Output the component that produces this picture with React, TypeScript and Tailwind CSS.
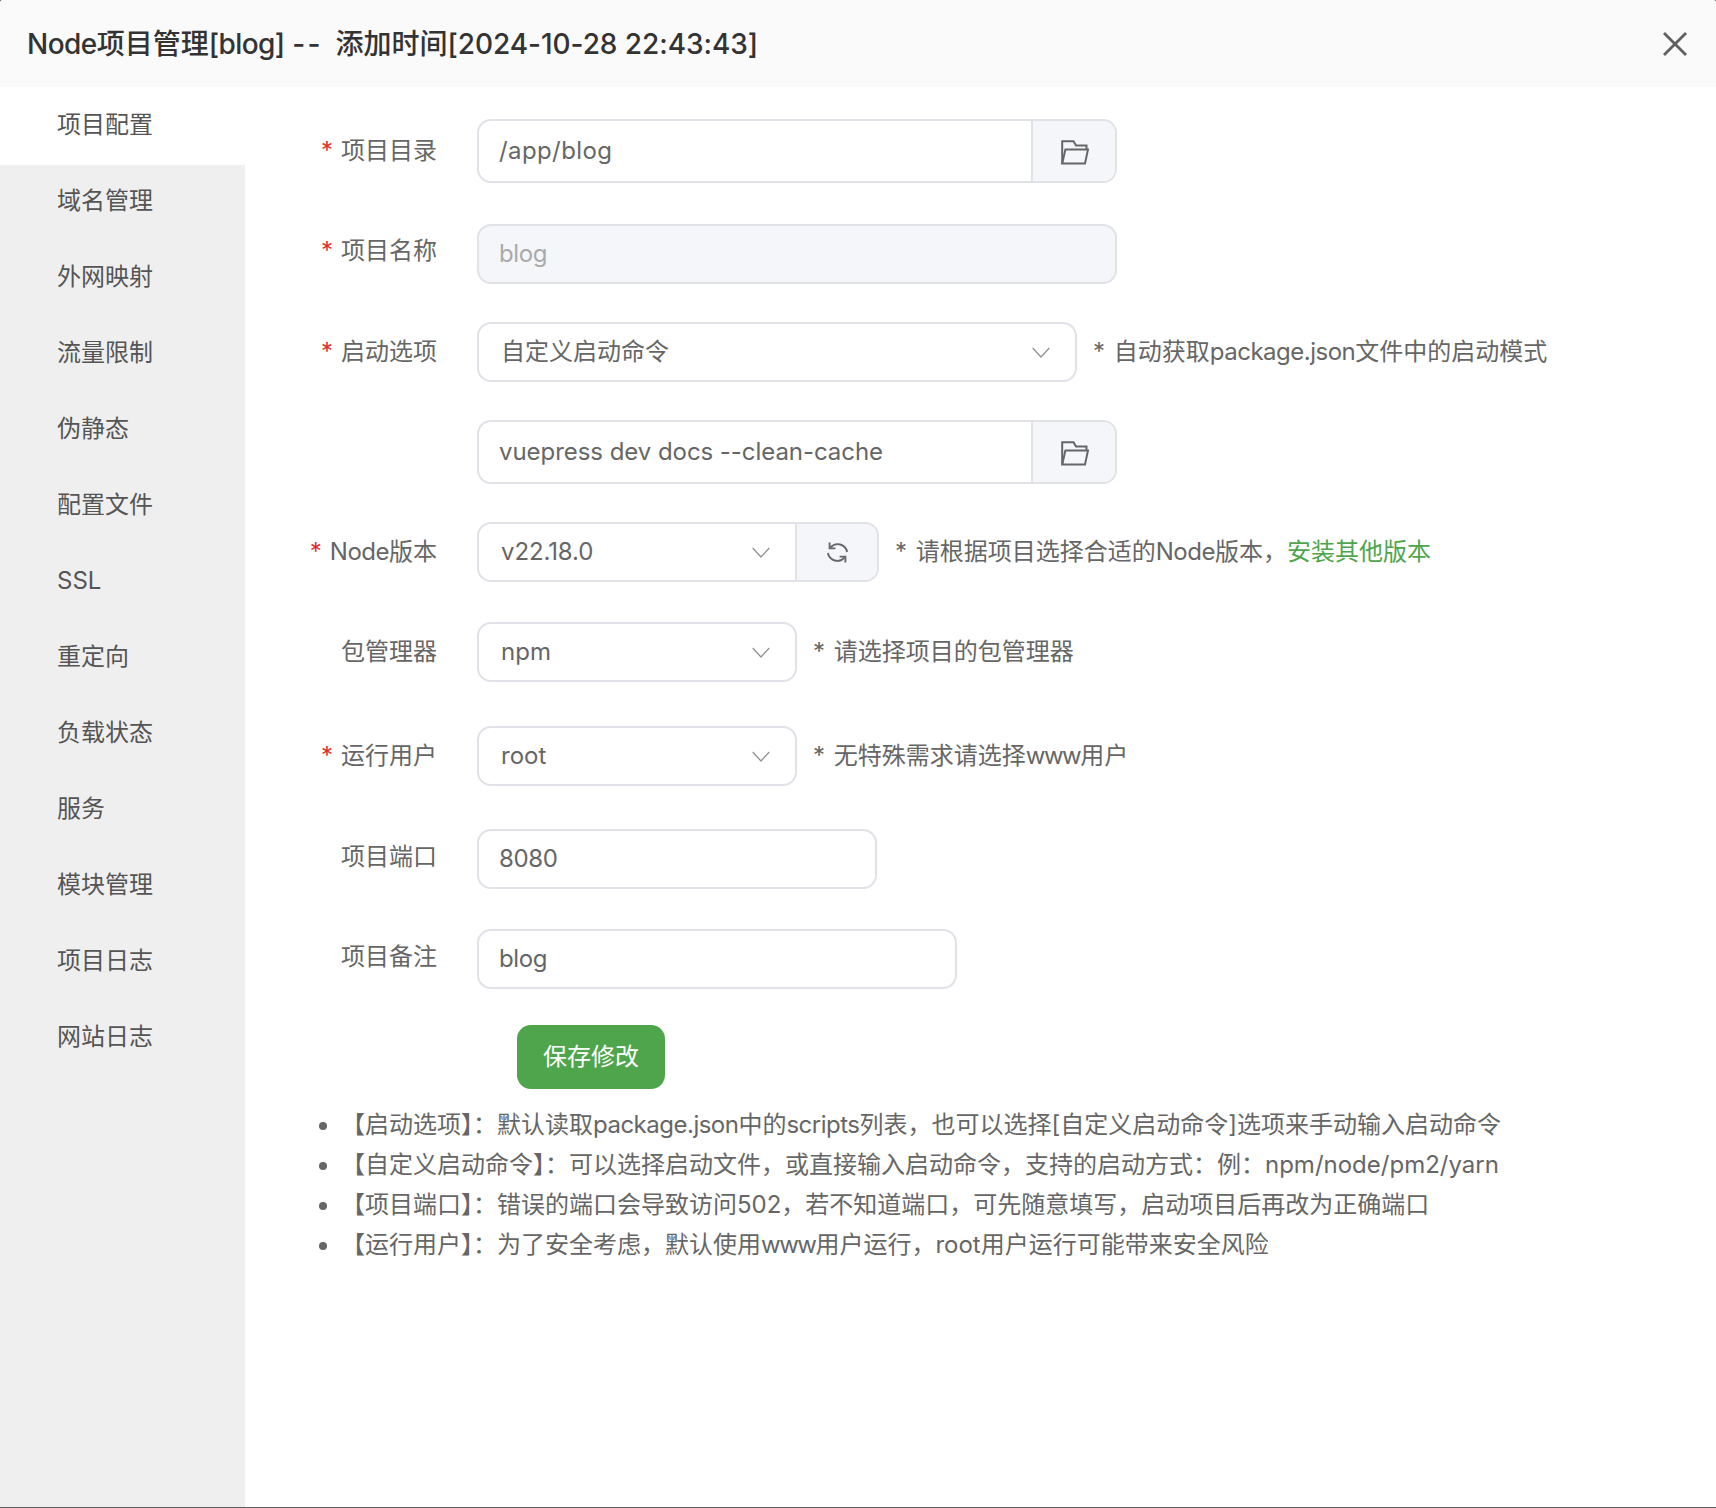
import React from "react";

const FolderIcon = () => (
  <svg width="28" height="25" viewBox="0 0 28 25" fill="none" stroke="#666" strokeWidth="2" className="ml-[1px]">
    <path d="M25.5 9.5V5.5H15L12.5 1.2H1.2V23.5" />
    <path d="M1.2 23.5H24L27 9.5H4.4L1.2 23.5Z" />
  </svg>
);

const Chevron = () => (
  <svg width="18" height="11" viewBox="0 0 18 11" fill="none" stroke="#8f8f8f" strokeWidth="1.2">
    <path d="M0.7 1L9 10L17.3 1" />
  </svg>
);

const Refresh = () => (
  <svg width="21" height="21" viewBox="0 0 21 21" fill="none" stroke="#666" strokeWidth="1.9">
    <path d="M3.6 5.4A9.5 9.5 0 0 1 20.1 10" />
    <path d="M0.9 11A9.5 9.5 0 0 0 17.4 15.6" />
    <path d="M2.6 0.6V6.4H8.4" />
    <path d="M18.4 20.4V14.6H12.6" />
  </svg>
);

const Label = ({ children, required, className = "" }: { children?: React.ReactNode; required?: boolean; className?: string }) => (
  <div className={`mr-[40px] w-[192px] shrink-0 text-right text-[24px] leading-[32px] text-[#666] ${className}`}>
    {required && <span className="mr-[8px] text-[#e02f2f]">*</span>}
    {children}
  </div>
);

const Hint = ({ children }: { children: React.ReactNode }) => (
  <div className="ml-[16px] whitespace-nowrap text-[24px] leading-[32px] text-[#666]">
    <span className="mr-[2px]">*</span> {children}
  </div>
);

const Tight = ({ children }: { children: React.ReactNode }) => <span className="tracking-[-0.5px]">{children}</span>;
const Www = () => <span className="tracking-[-1.5px]">www</span>;

const InputWithFolder = ({ value, track }: { value: string; track: string }) => (
  <div className="flex h-[64px] w-[640px] overflow-hidden rounded-[14px] border-2 border-[#e1e1e8]">
    <div className={`flex flex-1 items-center pl-[20px] text-[24px] text-[#666] ${track}`}>{value}</div>
    <div className="flex w-[84px] items-center justify-center border-l-2 border-[#e1e1e8] bg-[#f5f6fa] pt-[2px]">
      <FolderIcon />
    </div>
  </div>
);

const Select = ({ value, width }: { value: string; width: string }) => (
  <div className={`flex h-[60px] items-center justify-between rounded-[14px] border-2 border-[#e1e1e8] pl-[22px] pr-[25px] ${width}`}>
    <span className="text-[24px] text-[#666]">{value}</span>
    <Chevron />
  </div>
);

const TextInput = ({ value, width }: { value: string; width: string }) => (
  <div className={`flex h-[60px] items-center rounded-[14px] border-2 border-[#e1e1e8] pl-[20px] text-[24px] tracking-[-0.4px] text-[#666] ${width}`}>
    {value}
  </div>
);

const sideItems = ["项目配置", "域名管理", "外网映射", "流量限制", "伪静态", "配置文件", "SSL", "重定向", "负载状态", "服务", "模块管理", "项目日志", "网站日志"];

export default function App() {
  return (
    <div className="h-[1508px] w-[1716px] overflow-hidden bg-[#5f5f5f] font-['Inter','Noto_Sans_CJK_SC',sans-serif]">
      <div className="flex h-[1507px] flex-col overflow-hidden rounded-t-[3px] bg-white">
        <header className="flex h-[87px] shrink-0 items-center justify-between bg-[#fafafa] pl-[27px] pr-[29px]">
          <h1 className="text-[28px] font-medium leading-none text-[#333]">
            <span className="tracking-[-0.55px]">Node</span>项目管理<span className="tracking-[-0.55px]">[blog]</span>{" "}
            <span className="mr-[5px] tracking-[2.5px]">--</span> 添加时间<span className="tracking-[-0.05px]">[2024-10-28 22:43:43]</span>
          </h1>
          <svg width="24" height="24" viewBox="0 0 24 24" stroke="#5f5f5f" strokeWidth="2.8">
            <path d="M1 1L23 23M23 1L1 23" />
          </svg>
        </header>
        <div className="flex flex-1">
          <nav className="w-[245px] shrink-0 bg-[#efefef]">
            {sideItems.map((t, i) => (
              <div
                key={t}
                className={`flex items-center pl-[57px] text-[24px] text-[#555] ${i === 0 ? "-mb-[2px] h-[78px] bg-white pb-[2px]" : "h-[76px]"}`}
              >
                {t}
              </div>
            ))}
          </nav>
          <main className="flex-1 pt-[32px]">
            <div className="flex items-center">
              <Label required>项目目录</Label>
              <InputWithFolder value="/app/blog" track="tracking-[0.4px]" />
            </div>
            <div className="mt-[41px] flex items-center">
              <Label required className="pb-[6px]">项目名称</Label>
              <div className="flex h-[60px] w-[640px] items-center rounded-[14px] border-2 border-[#e1e1e8] bg-[#f5f6fa] pl-[20px] text-[24px] tracking-[-0.4px] text-[#aaa]">
                blog
              </div>
            </div>
            <div className="mt-[38px] flex items-center">
              <Label required>启动选项</Label>
              <Select value="自定义启动命令" width="w-[600px]" />
              <Hint>
                自动获取<Tight>package.json</Tight>文件中的启动模式
              </Hint>
            </div>
            <div className="mt-[38px] flex items-center">
              <Label />
              <InputWithFolder value="vuepress dev docs --clean-cache" track="tracking-[-0.05px]" />
            </div>
            <div className="mt-[38px] flex items-center">
              <Label required><Tight>Node</Tight>版本</Label>
              <div className="flex h-[60px] w-[402px] overflow-hidden rounded-[14px] border-2 border-[#e1e1e8]">
                <div className="flex flex-1 items-center justify-between pl-[22px] pr-[25px]">
                  <span className="text-[24px] tracking-[-0.1px] text-[#666]">v22.18.0</span>
                  <Chevron />
                </div>
                <div className="flex w-[82px] items-center justify-center border-l-2 border-[#e1e1e8] bg-[#f5f6fa]">
                  <Refresh />
                </div>
              </div>
              <Hint>
                请根据项目选择合适的<Tight>Node</Tight>版本，<span className="text-[#4fa54b]">安装其他版本</span>
              </Hint>
            </div>
            <div className="mt-[40px] flex items-center">
              <Label>包管理器</Label>
              <Select value="npm" width="w-[320px]" />
              <Hint>请选择项目的包管理器</Hint>
            </div>
            <div className="mt-[44px] flex items-center">
              <Label required>运行用户</Label>
              <Select value="root" width="w-[320px]" />
              <Hint>
                无特殊需求请选择<Www />用户
              </Hint>
            </div>
            <div className="mt-[43px] flex items-center">
              <Label className="pb-[5px]">项目端口</Label>
              <TextInput value="8080" width="w-[400px]" />
            </div>
            <div className="mt-[40px] flex items-center">
              <Label className="pb-[5px]">项目备注</Label>
              <TextInput value="blog" width="w-[480px]" />
            </div>
            <button className="ml-[272px] mt-[36px] flex h-[64px] w-[148px] items-center justify-center rounded-[14px] bg-[#4fa54b] text-[24px] text-white">
              保存修改
            </button>
            <ul className="ml-[96px] mt-[16px] list-disc whitespace-nowrap text-[24px] leading-[40px] text-[#666]">
              <li>
                【启动选项】：默认读取<Tight>package.json</Tight>中的<Tight>scripts</Tight>列表，也可以选择[自定义启动命令]选项来手动输入启动命令
              </li>
              <li>【自定义启动命令】：可以选择启动文件，或直接输入启动命令，支持的启动方式：例：npm/node/pm2/yarn</li>
              <li>【项目端口】：错误的端口会导致访问502，若不知道端口，可先随意填写，启动项目后再改为正确端口</li>
              <li>
                【运行用户】：为了安全考虑，默认使用<Www />用户运行，root用户运行可能带来安全风险
              </li>
            </ul>
          </main>
        </div>
      </div>
    </div>
  );
}
